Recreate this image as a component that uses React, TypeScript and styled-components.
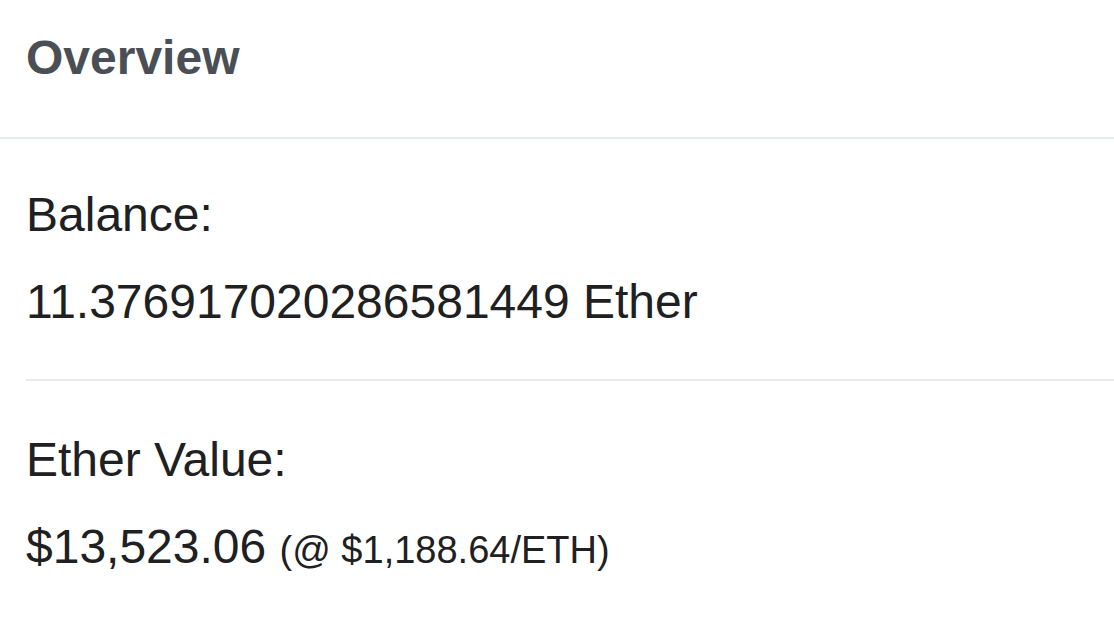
import React from 'react';
import styled, { createGlobalStyle } from 'styled-components';

const GlobalStyle = createGlobalStyle`
  html, body {
    margin: 0;
    padding: 0;
    background: #ffffff;
  }
  body {
    font-family: 'Liberation Sans', Arial, Helvetica, sans-serif;
    color: #1e2022;
    overflow: hidden;
  }
`;

const Card = styled.div`
  width: 100%;
  min-height: 622px;
  background: #ffffff;
`;

const CardHeader = styled.div`
  padding: 23px 26px 45px;
  border-bottom: 2px solid #e7eaf3;
`;

const Title = styled.h2`
  margin: 0;
  font-size: 48px;
  line-height: 69px;
  font-weight: 700;
  color: #4a4f55;
`;

const CardBody = styled.div`
  padding: 41px 0 0 26px;
`;

const Row = styled.div`
  display: flex;
  flex-direction: column;
  gap: 18px;
`;

const Label = styled.div`
  font-size: 48px;
  line-height: 69px;
  color: #1e2022;
`;

const Value = styled.div`
  font-size: 48px;
  line-height: 69px;
  color: #1e2022;
  white-space: nowrap;
`;

const Small = styled.span`
  font-size: 38px;
`;

const Divider = styled.hr`
  margin: 43px 0 44px;
  border: 0;
  border-top: 2px solid #e9eaf4;
`;

type InfoRowProps = {
  label: string;
  children: React.ReactNode;
};

const InfoRow: React.FC<InfoRowProps> = ({ label, children }) => (
  <Row>
    <Label>{label}</Label>
    <Value>{children}</Value>
  </Row>
);

const App: React.FC = () => {
  return (
    <>
      <GlobalStyle />
      <Card>
        <CardHeader>
          <Title>Overview</Title>
        </CardHeader>
        <CardBody>
          <InfoRow label="Balance:">11.376917020286581449 Ether</InfoRow>
          <Divider />
          <InfoRow label="Ether Value:">
            $13,523.06 <Small>(@ $1,188.64/ETH)</Small>
          </InfoRow>
        </CardBody>
      </Card>
    </>
  );
};

export default App;
